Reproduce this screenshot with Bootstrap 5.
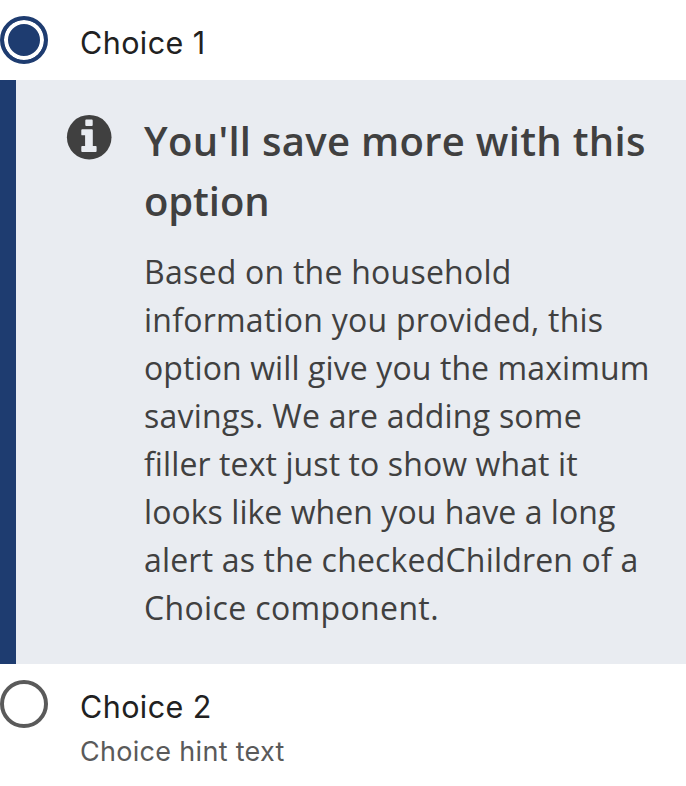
<!DOCTYPE html>
<html lang="en">
<head>
<meta charset="utf-8">
<meta name="viewport" content="width=device-width, initial-scale=1">
<title>Choices</title>
<link href="https://cdn.jsdelivr.net/npm/bootstrap@5.3.0/dist/css/bootstrap.min.css" rel="stylesheet">
<style>
body { font-family: "Open Sans", sans-serif; color: #404040; overflow: hidden; }
.choice { gap: 32px; padding-top: 16px; font-family: Inter, Roboto, sans-serif; color: #212121; }
.choice-first { height: 80px; }
.choice-radio { width: 48px; height: 48px; margin: 0; border: 4px solid #5a5a5a; flex: none; }
.choice-radio:checked { background: #1e3c70; background-image: none; border-color: #1e3c70; box-shadow: inset 0 0 0 4px #fff; }
.choice-label { font-size: 30.5px; line-height: 48px; padding-top: 3px; letter-spacing: .42px; }
.choice-hint { font-size: 27px; line-height: 42px; color: #5a5a5a; letter-spacing: .3px; }
.notice { height: 584px; background: #e9ecf1; border-left: 16px solid #1e3c70; padding: 31px 32px 32px 48px; }
.notice-icon { width: 50px; height: 50px; flex: none; margin-top: 1px; }
.notice-body { width: 510px; flex: none; }
.notice-title { font-size: 40px; line-height: 60px; font-weight: 600; margin-bottom: 17px; letter-spacing: .3px; }
.notice-title span { letter-spacing: -.1px; }
.notice-text { font-size: 32px; line-height: 48px; letter-spacing: .24px; white-space: nowrap; }
.line-tight { letter-spacing: .1px; }
.line-tighter { letter-spacing: .05px; }
.line-even { letter-spacing: .18px; }
.line-wide { letter-spacing: .36px; }
</style>
</head>
<body>
<div class="choice choice-first d-flex align-items-start">
  <input class="form-check-input choice-radio" type="radio" name="choice" id="c1" checked>
  <label class="choice-label" for="c1">Choice 1</label>
</div>
<div class="notice d-flex" role="alert">
  <svg class="notice-icon" viewBox="0 0 50 50" aria-hidden="true"><circle cx="25.2" cy="25.2" r="22.3" fill="#404040"/><path fill="#e9ecf1" d="M22.2 7.500h5.600q.9 0 .9.9v4.600q0 .9-.9.9h-5.600q-.9 0-.9-.9V8.400q0-.9.9-.9zM18.200 17.300h9.700q.9 0 .9.900v15.700h2.900q.9 0 .9.900V39q0 .9-.9.900H18.200q-.9 0-.9-.9V34.800q0-.9.9-.9h2.900V23.300h-2.900q-.9 0-.9-.9V18.200q0-.9.9-.9z"/></svg>
  <div class="ms-auto notice-body">
    <h2 class="notice-title">You'll save more with this <span>option</span></h2>
    <p class="notice-text mb-0">Based on the household<br>information you provided, this<br><span class="line-tight">option will give you the maximum</span><br>savings. We are adding some<br><span class="line-tight">filler text just to show what it</span><br><span class="line-tighter">looks like when you have a long</span><br><span class="line-even">alert as the checkedChildren of a</span><br><span class="line-wide">Choice component.</span></p>
  </div>
</div>
<div class="choice d-flex align-items-start">
  <input class="form-check-input choice-radio" type="radio" name="choice" id="c2">
  <div>
    <label class="choice-label d-block" for="c2">Choice 2</label>
    <div class="choice-hint">Choice hint text</div>
  </div>
</div>
<script src="https://cdn.jsdelivr.net/npm/bootstrap@5.3.0/dist/js/bootstrap.bundle.min.js"></script>
</body>
</html>
